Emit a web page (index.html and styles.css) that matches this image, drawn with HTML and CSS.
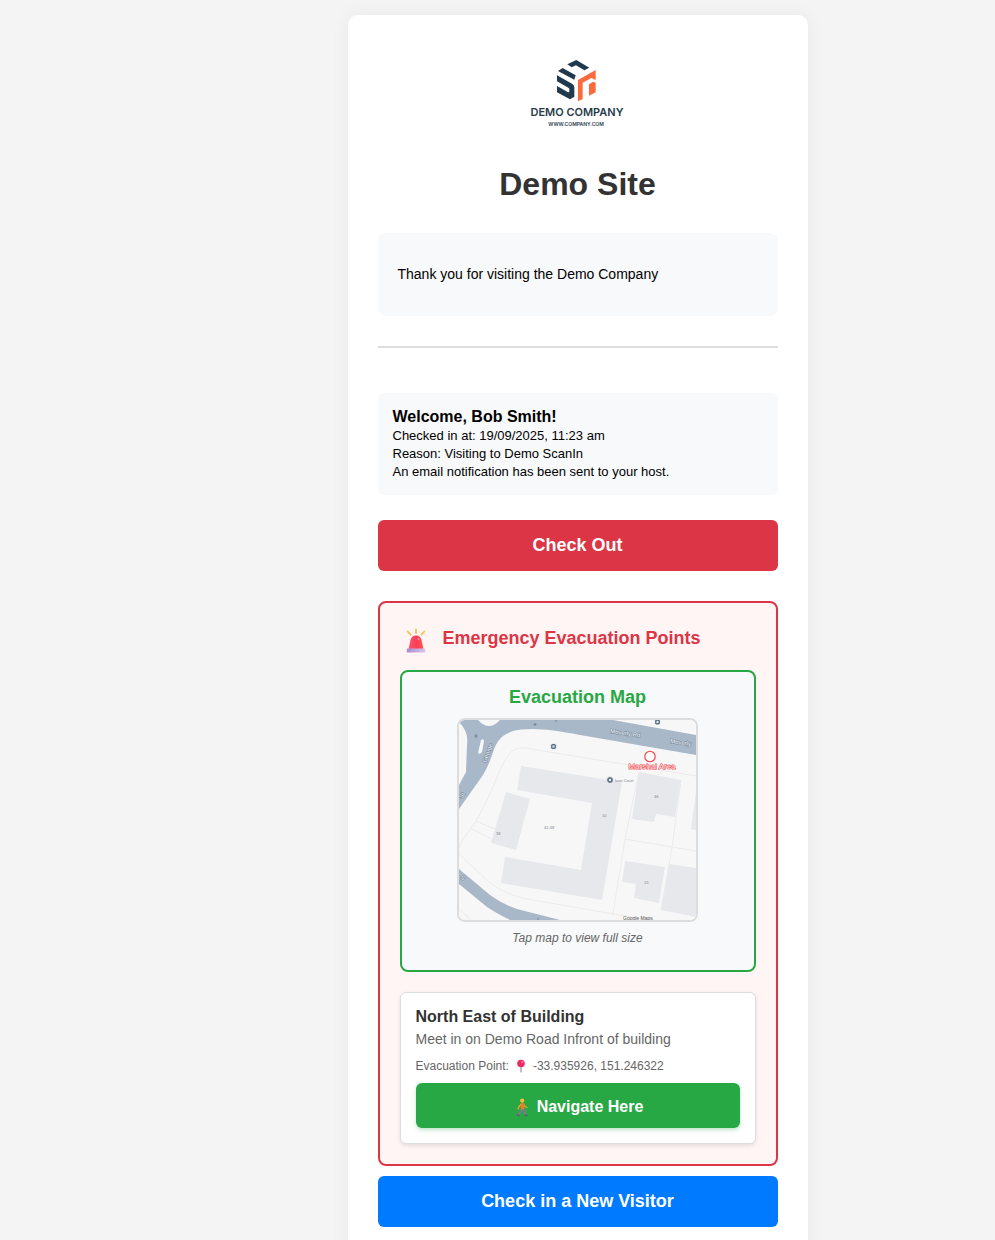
FILE: index.html
```html
<!DOCTYPE html>
<html lang="en">
<head>
<meta charset="utf-8">
<meta name="viewport" content="width=device-width, initial-scale=1">
<title>Demo Site</title>
<link rel="stylesheet" href="styles.css">
</head>
<body>
<main class="card">
  <svg class="logo" viewBox="0 -15 345 285" role="img" aria-label="Demo Company logo">
    <g fill="#21394d">
      <path d="M142 43 169 30 208 53 193 61 168 46 155 52Z"/>
      <path d="M114 63 128 54 167 76 163 89Z"/>
      <path d="M111 76 156 101Q163 105 163 112V140L150 148 111 127V108L143 126Q148 128 148 123V118Q148 115 145 113L111 94Z"/>
    </g>
    <g fill="#fb6a3c">
      <path d="M174 90 227 60V90L214 84 188 98V147L174 154Z"/>
      <path d="M207 103 219 95 227 98V127L207 137Z"/>
    </g>
    <text class="logo-name" x="171" y="198">DEMO COMPANY</text>
    <text class="logo-url" x="168" y="227">WWW.COMPANY.COM</text>
  </svg>
  <h1 class="site-title">Demo Site</h1>
  <p class="message">Thank you for visiting the Demo Company</p>
  <hr class="divider">
  <section class="visit">
    <h2 class="visit-title">Welcome, Bob Smith!</h2>
    <p>Checked in at: 19/09/2025, 11:23 am</p>
    <p>Reason: Visiting to Demo ScanIn</p>
    <p>An email notification has been sent to your host.</p>
  </section>
  <button class="button button-danger" type="button">Check Out</button>

  <section class="emergency">
    <h2 class="emergency-title">
      <svg class="siren" viewBox="0 0 32 32" aria-hidden="true">
        <defs>
          <linearGradient id="dome"><stop offset="0" stop-color="#f9586d"/><stop offset=".55" stop-color="#fb3c58"/><stop offset="1" stop-color="#fd5a4c"/></linearGradient>
          <linearGradient id="base"><stop offset="0" stop-color="#a98bcb"/><stop offset="1" stop-color="#d9c5ee"/></linearGradient>
        </defs>
        <path d="M16 6.500v3.500M7.800 8.500l2.700 3.200M24.200 8.500l-2.700 3.200" stroke="#fbc04b" stroke-width="1.800" stroke-linecap="round"/>
        <path d="M8.500 26 10.500 17Q11.500 12.500 16 12.500T21.500 17L23.500 26Z" fill="url(#dome)"/>
        <circle cx="18.500" cy="16" r="1" fill="#ff9ca4"/>
        <path d="M8 25.500h16q1.200 0 1.200 1.200v2.800H6.800v-2.800q0-1.200 1.200-1.200Z" fill="url(#base)"/>
      </svg>
      <span>Emergency Evacuation Points</span>
    </h2>
    <div class="map-panel">
      <h3 class="map-title">Evacuation Map</h3>
      <a class="map" href="#map" aria-label="Evacuation map">
        <svg viewBox="0 0 237 200" aria-hidden="true">
          <rect width="237" height="200" fill="#f7f7f7"/>
          <g fill="none" stroke="#ebebec" stroke-width="1">
            <path d="M17 101Q28 82 36 62T50 34Q56 27 66 28L237 56M17 101 38 110M11 108 32 119M17 101 2 122Q-1 127 0 134L31 163Q50 177 74 180L154 194 237 207M180 52 166 119 154 194M222 60 213 128 202 190M166 119 237 131M0 189 12 200"/>
          </g>
          <g fill="#a9b8c9">
            <path d="M0 0H19Q30 12 41 0H154L237 15V35L121 15Q90 9 74 9 60 9 54 11 44 15 41 19 37 23 34 32 30 45 24 55L0 89V65L7 52 8 25Q10 12 0 2Z"/>
            <path d="M0 149 31 175Q43 184 58 189L101 200H51Q37 193 28 187L0 164Z"/>
          </g>
          <path d="M22 20Q25 18 25 21L23 32Q21 35 19 33Z" fill="#f7f7f7"/>
          <g fill="#e7e8ec">
            <path d="M62 46 163 62 143 180 42 163 46 137 122 150 133 83 58 70Z"/>
            <path d="M47 72 71 79 57 130 32 123Z"/>
            <path d="M180 52 222 60 216 97 197 94 195 102 173 99Z"/>
            <path d="M237 72V110L232 109Z"/>
            <path d="M166 141 206 147 200 183 175 178 177 164 163 162Z"/>
            <path d="M210 144 237 148V197L202 190Z"/>
          </g>
          <g class="street">
            <text x="151" y="13" transform="rotate(8 151 13)">Moverly Rd</text>
            <text x="211" y="23" transform="rotate(8 211 23)">Moverly</text>
            <text x="27" y="43" transform="rotate(-70 27 43)">George</text>
            <text x="3" y="79" transform="rotate(-55 3 79)">St</text>
            <text x="1" y="158" transform="rotate(40 1 158)">S</text>
          </g>
          <g fill="#61788b" stroke="#f7f7f7" stroke-width="1">
            <rect x="91.500" y="23.500" width="6" height="6" rx="2"/>
            <rect x="195.500" y="-1" width="6" height="6" rx="2"/>
            <circle cx="151" cy="60" r="3.500"/>
          </g>
          <path d="M93.500 25.500h2v2h-2ZM197.500 1h2v2h-2ZM150 59h2v2h-2Z" fill="#e6edf2"/>
          <path d="M17 14v4M15.500 16h3M76 3v3M74.500 4.500h3M97 0v2M79 198v2" stroke="#718498" stroke-width="1"/>
          <g class="lot">
            <text x="156" y="62">Ivan Court</text>
            <text x="85" y="109">42-48</text>
            <text x="37" y="115">38</text>
            <text x="143" y="97">10</text>
            <text x="195" y="78">46</text>
            <text x="185" y="164">15</text>
          </g>
          <circle cx="191" cy="36.500" r="5.200" fill="#fff" stroke="#ef5055" stroke-width="1.300"/>
          <text class="marshal" x="193" y="49">Marshal Area</text>
          <text class="credit" x="164" y="200">Google Maps</text>
        </svg>
      </a>
      <p class="map-hint">Tap map to view full size</p>
    </div>
    <article class="point">
      <h3 class="point-title">North East of Building</h3>
      <p class="point-text">Meet in on Demo Road Infront of building</p>
      <p class="point-place">Evacuation Point:
        <svg class="pin" viewBox="0 0 16 14" aria-hidden="true">
          <path d="M8 6v7" stroke="#a18daf" stroke-width="1.200" stroke-linecap="round"/>
          <circle cx="8" cy="4.500" r="3.800" fill="#ea2b66"/>
          <circle cx="9.300" cy="3.200" r="1.100" fill="#ff8298"/>
        </svg>
        -33.935926, 151.246322</p>
      <button class="button button-go" type="button">
        <svg class="walker" viewBox="0 0 20 20" aria-hidden="true">
          <g fill="none" stroke-linecap="round" stroke-linejoin="round">
            <path d="M10 11.500 8.500 15 6 17.500M11 11.500 13 14.500V17.500" stroke="#80798d" stroke-width="2"/>
            <path d="M5.500 18 7 18.500M13 18.500h2" stroke="#62586d" stroke-width="1.400"/>
            <path d="M10 6.500 7 9.500 6 12M11.500 7.500 13 9.500 15 10.500" stroke="#f2a52d" stroke-width="1.300"/>
            <path d="M10.500 7V11" stroke="#f37a25" stroke-width="3.200"/>
          </g>
          <circle cx="10.200" cy="3.600" r="2.100" fill="#f9bd35"/>
        </svg>
        <span>Navigate Here</span>
      </button>
    </article>
  </section>
  <button class="button button-primary" type="button">Check in a New Visitor</button>
</main>
</body>
</html>
```
FILE: styles.css
```css
* {
  box-sizing: border-box;
}

body {
  margin: 0;
  padding: 15px 0 0 160px;
  background: #f4f4f4;
  color: #000;
  font-family: "Liberation Sans", Arial, sans-serif;
}

h1, h2, h3, p {
  margin: 0;
}

.card {
  max-width: 460px;
  margin: 0 auto;
  padding: 30px;
  background: #fff;
  border-radius: 10px;
  box-shadow: 0 0 20px rgba(0, 0, 0, 0.05);
}

.logo {
  display: block;
  width: 115px;
  height: 95px;
  margin: 0 auto 26px;
}

.logo text {
  fill: #263b4b;
  text-anchor: middle;
  font-family: Inter, sans-serif;
}

.logo-name {
  font-size: 33px;
  font-weight: 600;
}

.logo-url {
  font-size: 15px;
  font-weight: 600;
}

.site-title {
  margin-bottom: 31px;
  color: #333;
  font-size: 32px;
  line-height: 36px;
  text-align: center;
}

.message {
  padding: 34px 20px;
  background: #f8f9fa;
  border-radius: 8px;
  font-size: 14px;
  line-height: 15px;
}

.divider {
  height: 2px;
  margin: 30px 0 45px;
  border: 0;
  background: #ddd;
}

.visit {
  margin-bottom: 25px;
  padding: 15px 15px 14px;
  background: #f8f9fa;
  border-radius: 6px;
  font-size: 13px;
  line-height: 18px;
}

.visit-title {
  margin-bottom: 1px;
  font-size: 16px;
  line-height: 18px;
}

.button {
  display: flex;
  align-items: center;
  justify-content: center;
  width: 100%;
  padding: 15px;
  border: 0;
  border-radius: 6px;
  color: #fff;
  font: bold 18px/21px "Liberation Sans", Arial, sans-serif;
  cursor: pointer;
}

.button-danger {
  background: #dc3545;
}

.button-primary {
  background: #007bff;
}

.emergency {
  margin: 30px 0 10px;
  padding: 20px;
  background: #fff5f5;
  border: 2px solid #dc3545;
  border-radius: 8px;
}

.emergency-title {
  display: flex;
  gap: 11px;
  margin-bottom: 15px;
  color: #dc3545;
  font-size: 18px;
  line-height: 30px;
}

.siren {
  width: 32px;
  height: 32px;
  fill: none;
}

.map-panel {
  margin-bottom: 20px;
  padding: 15px 15px 25px;
  background: #f8f9fa;
  border: 2px solid #28a745;
  border-radius: 8px;
  text-align: center;
}

.map-title {
  margin-bottom: 11px;
  color: #28a745;
  font-size: 18px;
  line-height: 20px;
}

.map {
  display: block;
  max-width: 241px;
  margin: 0 auto 9px;
  overflow: hidden;
  border: 2px solid #ddd;
  border-radius: 8px;
}

.map svg {
  display: block;
  width: 100%;
}

.street text {
  fill: #f1f4f7;
  stroke: #75879a;
  stroke-width: 1px;
  paint-order: stroke;
  font-size: 6px;
}

.lot text {
  fill: #7b858d;
  font-size: 4px;
}

.marshal {
  fill: #fde3e4;
  stroke: #f0474d;
  stroke-width: 1px;
  paint-order: stroke;
  font-size: 8px;
  text-anchor: middle;
}

.credit {
  fill: #555;
  font-size: 5px;
}

.map-hint {
  color: #666;
  font-size: 12px;
  font-style: italic;
  line-height: 14px;
}

.point {
  padding: 15px;
  background: #fff;
  border: 1px solid #ddd;
  border-radius: 6px;
  box-shadow: 0 2px 4px rgba(0, 0, 0, 0.1);
}

.point-title {
  margin-bottom: 5px;
  color: #333;
  font-size: 16px;
  line-height: 18px;
}

.point-text {
  margin-bottom: 11px;
  color: #666;
  font-size: 14px;
  line-height: 16px;
}

.point-place {
  display: flex;
  align-items: center;
  gap: 4px;
  margin-bottom: 9px;
  color: #666;
  font-size: 12px;
  line-height: 16px;
}

.pin {
  width: 16px;
  height: 14px;
  fill: none;
}

.button-go {
  gap: 5px;
  padding: 13px 12px 11px;
  background: #28a745;
  box-shadow: 0 2px 4px rgba(40, 167, 69, 0.3);
  font-size: 16px;
}

.walker {
  width: 20px;
  height: 20px;
}
```
